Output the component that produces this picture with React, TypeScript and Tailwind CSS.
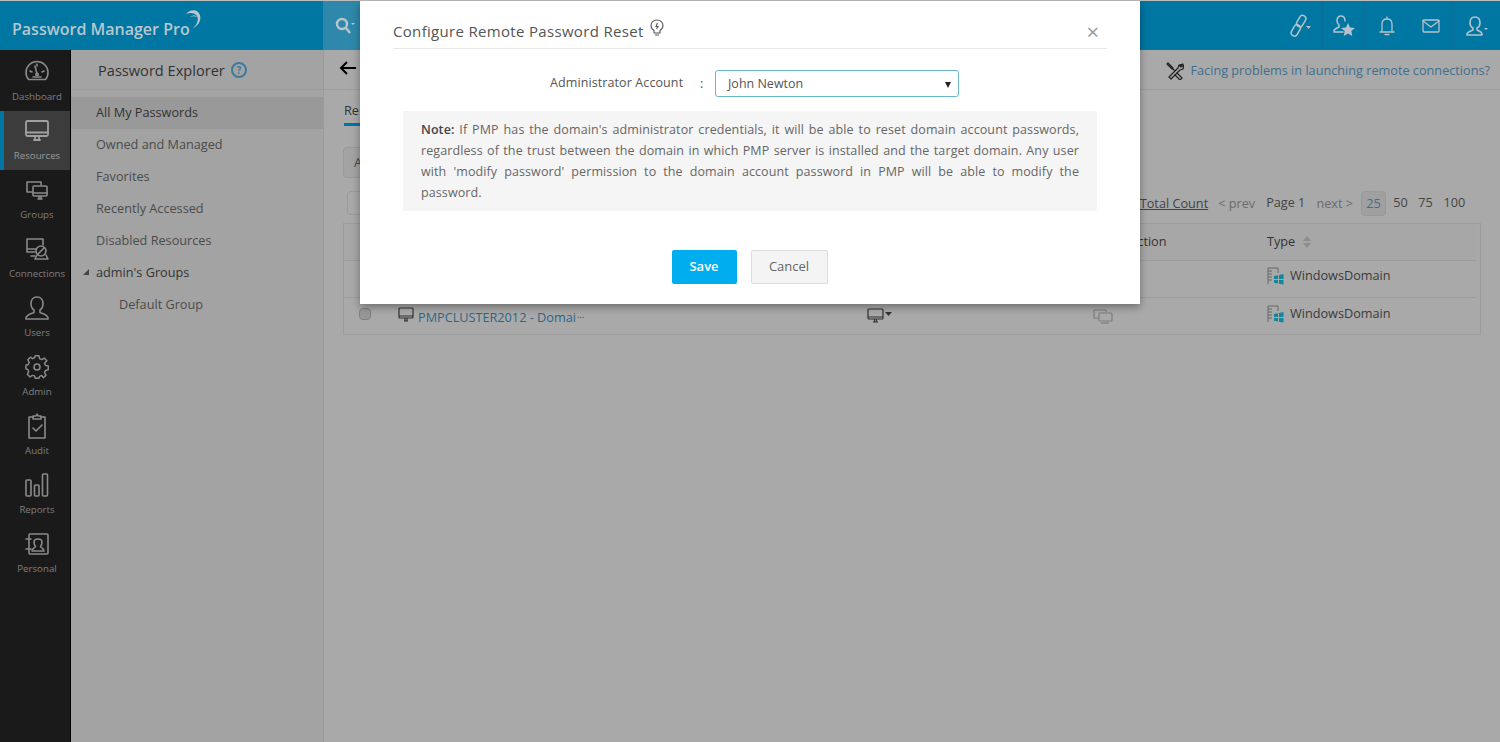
import React from "react";

const I = ({ children, w = 26, h = 26, c = "#8a8a8a", sw = 1.6 }: any) => (
  <svg width={w} height={h} viewBox={`0 0 ${w} ${h}`} fill="none" stroke={c} strokeWidth={sw} strokeLinecap="round" strokeLinejoin="round">{children}</svg>
);

const Monitor = ({ c = "#a0a0a0" }: any) => (
  <I c={c} sw={1.8}><rect x="2" y="3" width="22" height="15" rx="1.5" /><path d="M2 14.5h22M10 22h6M11 18v4M15 18v4" /></I>
);

const rail = [
  { n: "Dashboard", i: <I><path d="M4.5 20.5a11 11 0 1 1 17 0z" /><path d="M13 15l-2-8M6 12l2 1M20 12l-2 1M13 5v2M9 18h8" /><circle cx="13" cy="15.5" r="1.2" /></I> },
  { n: "Resources", active: true, i: <Monitor /> },
  { n: "Groups", i: <I><path d="M8 15H3V5h14v3" /><rect x="9" y="9" width="14" height="10" rx="1" /><path d="M9 16h14M14 22h4M15 19v3M17 19v3" /></I> },
  { n: "Connections", i: <I><path d="M11 16H3V3h16v6M3 13h9M7 20h4" /><circle cx="17" cy="15" r="5" /><path d="M13 19l-2 4h13l-2-4M14 18l6-6" /></I> },
  { n: "Users", i: <I><path d="M13 2c-4 0-6 3-6 6.500 0 3 1.500 5.500 3 6.500v2.500c-2.500 1-8 2.500-8 5.500v1h22v-1c0-3-5.500-4.500-8-5.500V15c1.500-1 3-3.500 3-6.500C19 5 17 2 13 2z" /></I> },
  { n: "Admin", i: <I><circle cx="13" cy="13" r="3" /><path d="M11 2h4l.7 3 2.300 1 2.700-1.600 2.800 2.800L21 10l1 2.200 3 .8v4l-3 .7-1 2.300 1.600 2.700-2.800 2.800L18 23l-2.300 1-.7 2h-4l-.7-2.500L8 23l-2.700 1.600-2.800-2.800L4 19l-1-2.300-2-.7v-4l2.500-.7L4.500 9 3 6.200 5.800 3.400 8 5l2.300-1z" transform="translate(1 0) scale(.93)" /></I> },
  { n: "Audit", i: <I><path d="M9 4H5v21h16V4h-4" /><path d="M9 6V3h3l1-2 1 2h3v3z" /><path d="M9 15l3 3 6-6" /></I> },
  { n: "Reports", i: <I><rect x="2" y="8" width="5" height="16" rx="1" /><rect x="10.500" y="13" width="4.500" height="11" rx="1" /><rect x="18.500" y="2" width="5" height="22" rx="1" /></I> },
  { n: "Personal", i: <I><rect x="5" y="3" width="19" height="20" rx="1" /><path d="M2 8h5M2 18h5M8 20c0-3 3-3 3.500-4.500C10 14 10 12 10 11c0-2 2-3 4-3s4 1 4 3c0 1 0 3-1.500 4.500.5 1.500 3.500 1.500 3.500 4.500z" /></I> },
];

const nav = ["Owned and Managed", "Favorites", "Recently Accessed", "Disabled Resources"];

const Win = () => (
  <svg width="17" height="18" viewBox="0 0 17 18" fill="none">
    <path d="M1 17V1h10v5M1 4h4M1 7h4M1 10h4M1 13h4" stroke="#666" strokeWidth="1" />
    <path d="M7 9l4-.8v3.800H7zM12 8l4.500-1v5H12zM7 13h4v3.500l-4-.7zM12 13h4.500v4.500L12 16.700z" fill="#12879f" />
  </svg>
);

export default function App() {
  return (
    <div className="relative w-[1500px] h-[742px] overflow-hidden bg-[#a9a9a9] text-[#3a3a3a] text-[12.700px] font-['Open_Sans',sans-serif]">
      <header className="h-[50px] flex bg-[#0076a3] border-t border-[#bdbdbd]">
        <div className="w-[323px] pl-3 pt-[7px] flex items-center text-[#b9c6cb]">
          <span className="text-[16px] font-semibold">Password Manager Pro</span>
          <svg width="18" height="24" viewBox="0 0 18 24" className="-mt-[16px] -ml-[6px]" fill="none">
            <path d="M2 5C5 1 11 0 14 3c4 4 3 11-3 15-1 1-2 1-3 2 5-4 7-9 5-13-2-3-6-4-11-2z" fill="#b9c6cb" />
            <path d="M6 8c3-2 6-2 7 0-2-1-4-1-7 0z" fill="#b9c6cb" />
          </svg>
        </div>
        <div className="w-[37px] bg-[#2e88ab] flex items-center pl-3">
          <svg width="20" height="18" viewBox="0 0 20 18" fill="none" stroke="#b9c6cb" strokeWidth="2.400">
            <circle cx="7" cy="7" r="5" /><path d="M11 11l4 5" />
            <path d="M16 6h4l-2 2z" fill="#b9c6cb" stroke="none" />
          </svg>
        </div>
        <div className="flex-1" />
        <div className="flex items-center text-[#b4c4ca] pr-[1px]">
          <div className="w-[46px] h-full flex justify-center items-center border-r border-[#0a6e96]">
            <I w={22} h={24} c="#b4c4ca" sw={1.500}>
              <rect x="9" y="1" width="6.500" height="12" rx="3.250" transform="rotate(30 12 7)" />
              <rect x="3.500" y="10.500" width="6.500" height="12" rx="3.250" transform="rotate(30 7 16.500)" />
              <path d="M17 12h5l-2.500 3z" fill="#b4c4ca" stroke="none" />
            </I>
          </div>
          <div className="w-[42px] h-full flex justify-center items-center border-r border-[#0a6e96]">
            <I w={24} h={24} c="#b4c4ca" sw={1.5}><path d="M9 2c-3 0-4 2-4 5 0 2 1 3 2 4v2c-2 1-5 2-5 4v1h9M13 7c0-3-1-5-4-5" /><path d="M16 9l2 4.500 5 .5-3.700 3 1 5-4.300-2.500-4.300 2.500 1-5L9 14l5-.5z" fill="#b4c4ca" stroke="none" /></I>
          </div>
          <div className="w-[44px] flex justify-center">
            <I w={20} h={22} c="#b4c4ca" sw={1.300}><path d="M10 2v2M5 16V9c0-3 2-5 5-5s5 2 5 5v7M3 17h14M8 19.500h4" /></I>
          </div>
          <div className="w-[44px] h-full flex justify-center items-center border-r border-[#0a6e96]">
            <I w={20} h={16} c="#b4c4ca" sw={1.300}><rect x="2" y="2" width="16" height="12" rx="1" /><path d="M2 3l8 6 8-6" /></I>
          </div>
          <div className="w-[46px] flex justify-center">
            <I w={24} h={24} c="#b4c4ca" sw={1.6}><path d="M11 3c-3 0-5 2-5 6 0 2 1 4 3 5v2c-2 1-6 2-6 4v1h15v-1c0-2-3-3-5-4v-2c2-1 3-3 3-5 0-4-2-6-5-6z" /><path d="M20 14h4l-2 2z" fill="#b4c4ca" stroke="none" /></I>
          </div>
        </div>
      </header>

      <div className="flex h-[692px]">
        <nav className="w-[71px] shrink-0 bg-[#1a1a1a] border-r border-black pt-[2px] flex flex-col">
          {rail.map((r) => (
            <div key={r.n} className={`h-[59px] shrink-0 flex flex-col items-center pt-[5px] text-[9.700px] leading-[14px] ${r.active ? "bg-[#3c3c3c] border-l-[4px] border-[#0076a3] text-[#9a9a9a]" : "pl-[4px] text-[#7f7f7f]"}`}>
              <div className="h-[30px] flex items-center">{r.i}</div>
              <span className="mt-[3px]">{r.n}</span>
            </div>
          ))}
        </nav>

        <aside className="w-[253px] shrink-0 bg-[#a3a3a3] border-r border-[#9b9b9b]">
          <div className="h-[40px] mb-[7px] pl-[27px] pt-[8px] flex items-start gap-[6px] border-b border-[#9c9c9c] text-[14.600px] leading-[24px] text-[#333]">
            Password Explorer
            <span className="mt-[4px] w-[16px] h-[16px] rounded-full border-2 border-[#3d7a9c] text-[#3d7a9c] text-[10px] leading-[12px] font-bold text-center">?</span>
          </div>
          <div className="h-[32px] pl-[25px] flex items-center bg-[#999999] text-[#333]">All My Passwords</div>
          {nav.map((n) => (
            <div key={n} className="h-[32px] pl-[25px] flex items-center text-[#4b4b4b]">{n}</div>
          ))}
          <div className="relative h-[32px] pl-[25px] flex items-center text-[#333]">
            <span className="absolute left-[12px] top-[12px] w-0 h-0 border-l-[6px] border-l-transparent border-b-[6px] border-b-[#444]" />
            admin's Groups
          </div>
          <div className="h-[32px] pl-[48px] flex items-center text-[#4b4b4b]">Default Group</div>
        </aside>

        <main className="flex-1 min-w-0 bg-[#a9a9a9]">
          <div className="h-[40px] flex items-center justify-between border-b border-[#9e9e9e] pl-[15px] pr-[10px]">
            <svg width="18" height="16" viewBox="0 0 18 16" fill="none" stroke="#000" strokeWidth="2" className="-mt-[3px]"><path d="M17 8H2M8 2L2 8l6 6" /></svg>
            <div className="flex items-center gap-[7px] pt-[2px] text-[#3f6f8c]">
              <I w={19} h={19} c="#222" sw={1.200}><path d="M3 2l5 5-1 1-5-5zM7 7l3 3M18 3l-4 1-1 3-9 9 2 2 9-9 3-1 1-4-3 2-1-1z" /><path d="M12 12l5 5-2 2-5-5" /></I>
              <span>Facing problems in launching remote connections?</span>
            </div>
          </div>
          <div className="pl-[20px] pt-[11px]">
            <div className="w-[16px] h-[25px] border-b-[3px] border-[#0076a3] text-[#333] overflow-hidden">Re</div>
          </div>
          <div className="ml-[19px] mt-[21px] w-[40px] h-[31px] border border-[#9a9a9a] bg-[#a3a3a3] rounded-sm pl-[10px] leading-[29px] text-[#444]">A</div>

          <div className="mx-[19px] mt-[12px] h-[26px] flex items-center justify-between text-[#444]">
            <div className="ml-[4px] w-[30px] h-[24px] border border-[#9a9a9a] rounded-sm" />
            <div className="flex items-center pr-[14px] pt-[1px]">
              <span className="underline mr-[10px]">Total Count</span>
              <span className="text-[#6b6b6b] mr-[11px]">&lt; prev</span>
              <span className="mr-[11px] -mt-[1px]">Page 1</span>
              <span className="text-[#6b6b6b] mr-[8px]">next &gt;</span>
              <span className="w-[25px] h-[25px] border border-[#989898] bg-[#a0a0a0] text-[#3f6f8c] rounded-sm text-center leading-[23px] mr-[2px] -mt-[1px]">25</span>
              <span className="w-[25px] text-center -mt-[1px]">50</span>
              <span className="w-[25px] text-center -mt-[1px]">75</span>
              <span className="w-[25px] text-center ml-[4px] -mt-[1px]">100</span>
            </div>
          </div>

          <div className="mx-[19px] mt-[7px] h-[112px] border border-[#9c9c9c] pr-[4px]">
            <div className="h-[37px] grid grid-cols-[755px_168px_1fr] items-center border-b border-[#9c9c9c] bg-[#a7a7a7]">
              <span />
              <span className="text-[#333]">Connection</span>
              <span className="flex items-center gap-[8px] text-[#333]">Type
                <svg width="8" height="12" viewBox="0 0 8 12" fill="#8c8c8c"><path d="M4 0l4 5H0zM4 12L0 7h8z" /></svg>
              </span>
            </div>
            <div className="h-[37px] grid grid-cols-[923px_1fr] items-center border-b border-[#9c9c9c]">
              <span />
              <span className="flex items-center gap-[6px] -mt-[6px]"><Win />WindowsDomain</span>
            </div>
            <div className="h-[36px] grid grid-cols-[54px_469px_226px_174px_1fr] items-center">
              <span className="ml-[15px] w-[12px] h-[12px] border border-[#7f7f7f] bg-[#989898] rounded-sm -mt-[5px]" />
              <span className="flex items-center gap-[4px] text-[#2c6687]">
                <span className="shrink-0 -mt-[2px]"><svg width="16" height="16" viewBox="0 0 16 16" fill="none" stroke="#333" strokeWidth="1.200"><rect x="1" y="1" width="14" height="10" rx="1" /><path d="M1 9h14M6 14h4M7 11v3M9 11v3" /></svg></span>
                <span className="mt-[4px]">PMPCLUSTER2012 - Domai<sup className="text-[#444] ml-[1px]">...</sup></span>
              </span>
              <span className="flex items-center">
                <svg width="26" height="16" viewBox="0 0 26 16" fill="none" stroke="#333" strokeWidth="1.200"><rect x="1" y="1" width="15" height="10" rx="1" /><path d="M1 9h15M6 14h5M7.500 11v3M9.500 11v3" /><path d="M18 4h7l-3.500 4z" fill="#333" stroke="none" /></svg>
              </span>
              <span>
                <svg width="20" height="16" viewBox="0 0 20 16" fill="none" stroke="#7f7f7f" strokeWidth="1.200"><path d="M6 10H1V2h12v2" /><rect x="6" y="5" width="13" height="8" rx="1" /><path d="M8 15h8" /></svg>
              </span>
              <span className="flex items-center gap-[6px] -mt-[4px]"><Win />WindowsDomain</span>
            </div>
          </div>
        </main>
      </div>

      <div className="absolute left-[360px] top-[1px] w-[780px] h-[303px] bg-white shadow-[0_3px_8px_rgba(0,0,0,0.35)] px-[33px] text-[#555]">
        <div className="h-[48px] flex items-center justify-between border-b border-[#e8e8e8] text-[15px] pt-[13px] pr-[8px]">
          <span className="flex items-center gap-[6px] tracking-[0.32px]">
            Configure Remote Password Reset
            <svg width="14" height="18" viewBox="0 0 14 18" fill="none" stroke="#555" strokeWidth="1.100" className="-mt-[6px]"><path d="M4 11.500C2.500 10.500 1 9 1 6.500 1 3.500 3.500 1 7 1s6 2.500 6 5.500c0 2.500-1.500 4-3 5V14H4zM5 16h4M7.500 4L6 7.500h2L6.500 10" /></svg>
          </span>
          <span className="text-[22px] leading-none text-[#9a9a9a] -mt-[1px]">×</span>
        </div>
        <div className="h-[62px] flex items-start pt-[21px] pl-[157px]">
          <span className="w-[150px] leading-[26px] text-[12.500px] tracking-[0.1px]">Administrator Account</span>
          <span className="w-[15px] leading-[26px]">:</span>
          <div className="w-[244px] h-[27px] border border-[#6cb6cb] rounded-[3px] pl-[12px] pr-[7px] pt-[2px] flex items-center justify-between text-[12.500px]">
            John Newton
            <span className="w-0 h-0 border-x-[3px] border-x-transparent border-t-[6px] border-t-[#222]" />
          </div>
        </div>
        <div className="ml-[10px] w-[694px] h-[100px] bg-[#f5f5f5] px-[18px] pt-[8px] text-[12.500px] leading-[21px] tracking-[0.1px] text-justify text-[#666]">
          <b className="font-semibold text-[#444]">Note:</b> If PMP has the domain's administrator credentials, it will be able to reset domain account passwords, regardless of the trust between the domain in which PMP server is installed and the target domain. Any user with 'modify password' permission to the domain account password in PMP will be able to modify the password.
        </div>
        <div className="flex justify-center gap-[14px] mt-[39px] pr-[1px]">
          <div className="w-[65px] h-[34px] bg-[#00aeef] rounded-[2px] text-white font-semibold text-[13px] flex items-center justify-center">Save</div>
          <div className="w-[77px] h-[34px] bg-[#f4f4f4] border border-[#dcdcdc] rounded-[2px] text-[#666] text-[13px] flex items-center justify-center">Cancel</div>
        </div>
      </div>
    </div>
  );
}
